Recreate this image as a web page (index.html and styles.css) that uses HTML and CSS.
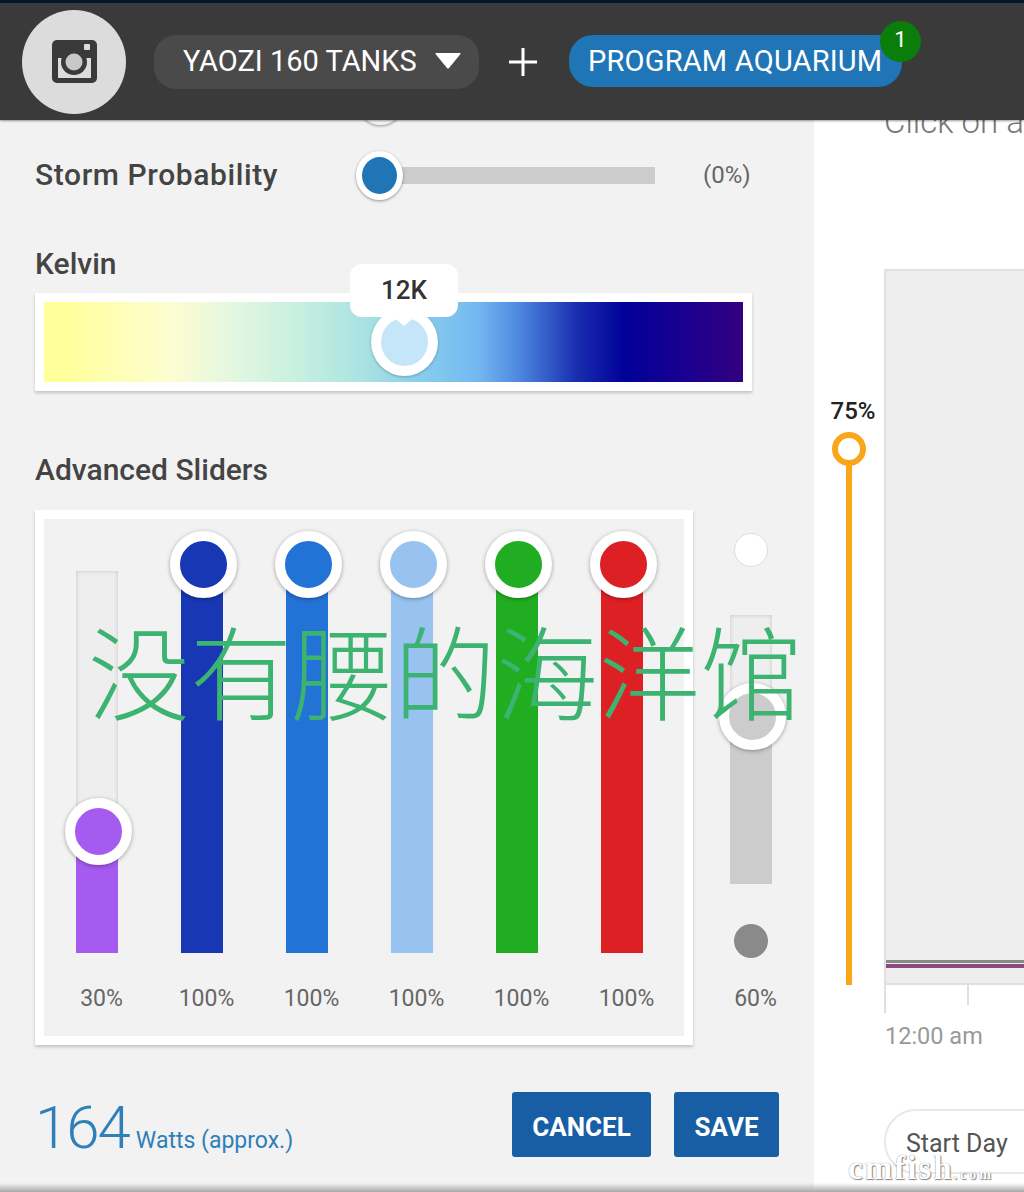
FILE: index.html
```html
<!DOCTYPE html>
<html lang="zh">
<head>
  <meta charset="UTF-8" />
  <meta name="viewport" content="width=device-width, initial-scale=1.0" />
  <title>Program Aquarium</title>
  <link rel="stylesheet" href="styles.css">
</head>
<body>
  <header class="topbar">
    <div class="logo">
      <svg width="45" height="43" viewBox="0 0 45 43">
        <rect width="45" height="43" rx="5" fill="#3a3a3a"/>
        <rect x="6" y="18" width="33" height="20" fill="#dcdcdc"/>
        <circle cx="22" cy="22" r="13" fill="#3a3a3a"/>
        <circle cx="22" cy="22" r="8.5" fill="#c8c8c8"/>
        <rect x="32" y="4" width="6" height="6" rx="1" fill="#dcdcdc"/>
      </svg>
    </div>
    <div class="tank-select">
      <span>YAOZI 160 TANKS</span>
      <svg width="26" height="16" viewBox="0 0 26 16"><path d="M1 0h24q1 0 .5 1L14 15q-1 1-2 0L.5 1Q0 0 1 0z" fill="#fff"/></svg>
    </div>
    <svg class="plus" width="28" height="28" viewBox="0 0 28 28"><path d="M14 0v28M0 14h28" stroke="#fff" stroke-width="3"/></svg>
    <div class="program-btn">
      PROGRAM AQUARIUM
      <span class="badge">1</span>
    </div>
  </header>

  <main class="page">
    <section class="panel">
      <div class="peek"></div>

      <div class="storm">
        <div class="label storm-label">Storm Probability</div>
        <div class="storm-track"><span class="storm-thumb"></span></div>
        <div class="storm-value">(0%)</div>
      </div>

      <div class="label kelvin-label">Kelvin</div>
      <div class="kelvin">
        <div class="kelvin-bar">
          <span class="kelvin-thumb"></span>
          <span class="kelvin-tip">12K</span>
        </div>
      </div>

      <div class="label advanced-label">Advanced Sliders</div>
      <div class="sliders">
        <div class="card">
          <div class="channel">
            <div class="track">
              <div class="fill purple" style="height: 30%"></div>
              <span class="thumb purple" style="bottom: 30%"></span>
            </div>
            <div class="pct">30%</div>
          </div>
          <div class="channel">
            <div class="track">
              <div class="fill navy" style="height: 100%"></div>
              <span class="thumb navy" style="bottom: 100%"></span>
            </div>
            <div class="pct">100%</div>
          </div>
          <div class="channel">
            <div class="track">
              <div class="fill blue" style="height: 100%"></div>
              <span class="thumb blue" style="bottom: 100%"></span>
            </div>
            <div class="pct">100%</div>
          </div>
          <div class="channel">
            <div class="track">
              <div class="fill sky" style="height: 100%"></div>
              <span class="thumb sky" style="bottom: 100%"></span>
            </div>
            <div class="pct">100%</div>
          </div>
          <div class="channel">
            <div class="track">
              <div class="fill green" style="height: 100%"></div>
              <span class="thumb green" style="bottom: 100%"></span>
            </div>
            <div class="pct">100%</div>
          </div>
          <div class="channel">
            <div class="track">
              <div class="fill red" style="height: 100%"></div>
              <span class="thumb red" style="bottom: 100%"></span>
            </div>
            <div class="pct">100%</div>
          </div>
        </div>

        <div class="dimmer">
          <span class="sun"></span>
          <div class="dim-track">
            <div class="fill grey" style="height: 60%"></div>
            <span class="thumb grey" style="bottom: 60%"></span>
          </div>
          <span class="moon"></span>
          <div class="pct">60%</div>
        </div>
      </div>

      <div class="footer">
        <div class="watts"><span class="watts-num">164</span> <span class="watts-unit">Watts (approx.)</span></div>
        <div class="actions">
          <button class="btn cancel">CANCEL</button>
          <button class="btn">SAVE</button>
        </div>
      </div>
    </section>

    <section class="schedule">
      <div class="hint">Click on a</div>
      <div class="chart-row">
        <div class="time-slider">
          <div class="time-pct">75%</div>
          <span class="time-knob"></span>
          <span class="time-line"></span>
        </div>
        <div class="chart">
          <div class="line line-grey"></div>
          <div class="line line-purple"></div>
        </div>
      </div>
      <div class="axis">
        <span class="tick"></span>
        <span class="tick short"></span>
      </div>
      <div class="axis-label">12:00 am</div>
      <div class="start-day">Start Day</div>
    </section>
  </main>

  <div class="bottom-shade"></div>
  <div class="stamp">没有腰的海洋馆</div>
  <div class="site-mark">cmfish<small>.com</small></div>
</body>
</html>
```

FILE: styles.css
```css
* {
  box-sizing: border-box;
}
html, body {
  margin: 0;
  height: 1192px;
  overflow: hidden;
}
body {
  position: relative;
  font-family: Roboto, "Liberation Sans", sans-serif;
  background-color: #fff;
  color: #444;
}

/* top bar */
.topbar {
  position: relative;
  z-index: 2;
  display: flex;
  align-items: center;
  height: 120px;
  padding-left: 22px;
  background-color: #3a3a3a;
  border-top: 3px solid #04162a;
  box-shadow: 0 1px 2px rgba(0,0,0,.4);
}
.logo {
  display: flex;
  justify-content: center;
  align-items: center;
  width: 104px;
  height: 104px;
  border-radius: 50%;
  background-color: #dcdcdc;
}
.tank-select {
  display: flex;
  align-items: center;
  gap: 18px;
  width: 325px;
  height: 54px;
  margin-left: 28px;
  padding: 0 0 2px 29px;
  border-radius: 22px;
  background-color: #4a4a4a;
  color: #fff;
  font-size: 29px;
}
.plus {
  margin-left: 30px;
}
.program-btn {
  position: relative;
  display: flex;
  align-items: center;
  width: 333px;
  height: 52px;
  margin: -2px 0 0 32px;
  padding-left: 19px;
  border-radius: 24px;
  background-color: #1f75b5;
  color: #fff;
  font-size: 29px;
  letter-spacing: .2px;
  white-space: nowrap;
}
.badge {
  position: absolute;
  top: -14px;
  right: -19px;
  width: 41px;
  height: 41px;
  border-radius: 50%;
  background-color: #0a7d0a;
  font-size: 22px;
  line-height: 38px;
  text-align: center;
}

.page {
  display: flex;
  height: 1072px;
}

/* left panel */
.panel {
  position: relative;
  width: 814px;
  padding: 38px 0 0 35px;
  background-color: #f2f2f2;
}
.peek {
  position: absolute;
  top: -44px;
  left: 357px;
  width: 47px;
  height: 49px;
  border-radius: 50%;
  background-color: #f4f4f4;
  box-shadow: 0 1px 3px rgba(0,0,0,.4);
}
.label {
  height: 30px;
  color: #444;
  font-size: 30px;
  font-weight: 500;
  line-height: 30px;
  white-space: nowrap;
}
.storm {
  display: flex;
  align-items: center;
  height: 34px;
}
.storm-label {
  width: 345px;
  letter-spacing: .6px;
}
.storm-track {
  position: relative;
  width: 275px;
  height: 17px;
  background-color: #ccc;
}
.storm-thumb {
  position: absolute;
  top: -16px;
  left: -24px;
  width: 47px;
  height: 49px;
  border: 6px solid #fff;
  border-radius: 50%;
  background-color: #1f75b5;
  box-shadow: 0 1px 3px rgba(0,0,0,.4);
}
.storm-value {
  margin-left: 48px;
  color: #666;
  font-size: 24px;
}
.kelvin-label {
  margin-top: 57px;
}
.kelvin {
  width: 717px;
  height: 98px;
  margin-top: 14px;
  padding: 9px;
  background-color: #fff;
  box-shadow: 0 2px 3px rgba(0,0,0,.2);
}
.kelvin-bar {
  position: relative;
  height: 80px;
  background: linear-gradient(to right, #ffff99 0%, #ffff9c 3%, #fdfdd0 18%, #e4f7e0 27%, #c8f0e0 36%, #a8e2e2 46%, #84cbee 55%, #74b8f0 62%, #4d88e0 68%, #1a30b0 76%, #000099 83%, #1c0090 92%, #33007f 100%);
}
.kelvin-thumb {
  position: absolute;
  top: 6px;
  left: 327px;
  width: 67px;
  height: 68px;
  border: 10px solid #fff;
  border-radius: 50%;
  background-color: #c5e6f8;
  box-shadow: 0 1px 3px rgba(0,0,0,.25);
}
.kelvin-tip {
  position: absolute;
  top: -38px;
  left: 306px;
  width: 108px;
  height: 53px;
  border-radius: 12px;
  background-color: #fff;
  color: #333;
  font-size: 26px;
  font-weight: 500;
  line-height: 52px;
  text-align: center;
}
.kelvin-tip::after {
  content: "";
  position: absolute;
  bottom: -9px;
  left: 42px;
  border-top: 10px solid #fff;
  border-left: 12px solid transparent;
  border-right: 12px solid transparent;
}
.advanced-label {
  margin-top: 64px;
}
.sliders {
  display: flex;
  gap: 37px;
  margin-top: 25px;
}
.card {
  display: flex;
  gap: 63px;
  width: 658px;
  height: 535px;
  padding: 52px 0 0 32px;
  border: 9px solid #fff;
  background-color: #f2f2f2;
  box-shadow: 0 2px 3px rgba(0,0,0,.2);
}
.channel {
  width: 42px;
}
.track {
  position: relative;
  height: 382px;
  background-color: #eee;
  box-shadow: inset 0 0 4px rgba(0,0,0,.18);
}
.fill {
  position: absolute;
  left: 0;
  right: 0;
  bottom: 0;
}
.thumb {
  position: absolute;
  left: -11px;
  width: 67px;
  height: 67px;
  margin-bottom: -27px;
  border: 10px solid #fff;
  border-radius: 50%;
  box-shadow: 0 1px 4px rgba(0,0,0,.35);
}
.purple { background-color: #a55bef; }
.navy { background-color: #1737b4; }
.blue { background-color: #2372d6; }
.sky { background-color: #98c3f0; }
.green { background-color: #21ad21; }
.red { background-color: #dd2024; }
.grey { background-color: #ccc; }
.pct {
  display: flex;
  justify-content: center;
  height: 30px;
  margin-top: 31px;
  padding-left: 9px;
  color: #666;
  font-size: 23px;
  line-height: 30px;
  white-space: nowrap;
}

/* dimmer next to the card */
.dimmer {
  display: flex;
  flex-direction: column;
  align-items: center;
  width: 42px;
  padding-top: 23px;
}
.sun {
  width: 34px;
  height: 34px;
  border: 1px solid #ddd;
  border-radius: 50%;
  background-color: #fff;
}
.dim-track {
  position: relative;
  width: 42px;
  height: 269px;
  margin-top: 48px;
  background-color: #eee;
  box-shadow: inset 0 0 4px rgba(0,0,0,.18);
}
.moon {
  width: 34px;
  height: 34px;
  margin-top: 40px;
  border-radius: 50%;
  background-color: #8a8a8a;
}
.dimmer .pct {
  margin-top: 26px;
}

.footer {
  display: flex;
  justify-content: space-between;
  width: 744px;
  margin-top: 47px;
}
.watts {
  display: flex;
  align-items: baseline;
  gap: 7px;
  color: #2f7fb8;
}
.watts-num {
  font-size: 60px;
  font-weight: 300;
  letter-spacing: -2px;
}
.watts-unit {
  font-size: 23px;
}
.actions {
  display: flex;
  gap: 23px;
}
.btn {
  width: 105px;
  height: 65px;
  padding-top: 6px;
  border: 0;
  border-radius: 3px;
  background-color: #175ea4;
  color: #fff;
  font-family: Roboto, "Liberation Sans", sans-serif;
  font-size: 26px;
  font-weight: 700;
}
.cancel {
  width: 139px;
}

/* right side */
.schedule {
  flex: 1;
  min-width: 0;
  padding-left: 16px;
  overflow: hidden;
}
.hint {
  height: 30px;
  margin: -13px 0 0 54px;
  color: #777;
  font-size: 33px;
  font-weight: 300;
  line-height: 30px;
  white-space: nowrap;
}
.chart-row {
  display: flex;
  height: 716px;
  margin-top: 132px;
}
.time-slider {
  display: flex;
  flex-direction: column;
  justify-content: flex-end;
  align-items: center;
  width: 38px;
  margin-right: 16px;
}
.time-pct {
  height: 36px;
  margin-left: 8px;
  color: #222;
  font-size: 24px;
  font-weight: 500;
  line-height: 30px;
}
.time-knob {
  width: 34px;
  height: 34px;
  border: 6px solid #f9a61a;
  border-radius: 50%;
  background-color: #fff;
}
.time-line {
  width: 6px;
  height: 519px;
  background-color: #f9a61a;
}
.chart {
  display: flex;
  flex-direction: column;
  justify-content: flex-end;
  flex: 1;
  padding-bottom: 15px;
  background-color: #eee;
  border-top: 2px solid #e0e0e0;
  border-left: 2px solid #e0e0e0;
  border-bottom: 2px solid #e0e0e0;
}
.line {
  height: 3px;
}
.line-grey {
  background-color: #8a8a8a;
}
.line-purple {
  height: 4px;
  margin-top: 1px;
  background-color: #8c4a80;
}
.axis {
  display: flex;
  align-items: flex-start;
  gap: 81px;
  height: 28px;
  margin-left: 54px;
}
.tick {
  width: 2px;
  height: 28px;
  background-color: #e0e0e0;
}
.tick.short {
  height: 20px;
}
.axis-label {
  height: 30px;
  margin: 8px 0 0 55px;
  color: #999;
  font-size: 23.5px;
  line-height: 30px;
  white-space: nowrap;
}
.start-day {
  display: flex;
  align-items: center;
  width: 260px;
  height: 65px;
  margin: 58px 0 0 54px;
  padding: 3px 0 0 20px;
  border: 2px solid #e8e8e8;
  border-radius: 32px;
  color: #555;
  font-size: 25px;
}

/* things lying over the page */
.bottom-shade {
  position: absolute;
  left: 0;
  right: 0;
  bottom: 0;
  height: 9px;
  background: linear-gradient(#f2f2f200, #a8a8a8);
}
.stamp {
  position: absolute;
  top: 609px;
  left: 88px;
  color: #3cb371;
  font-family: "Noto Sans CJK SC", sans-serif;
  font-size: 102px;
  font-weight: 300;
  line-height: 120px;
  white-space: nowrap;
}
.site-mark {
  position: absolute;
  top: 1152px;
  left: 848px;
  color: #fff;
  font-family: "Liberation Serif", serif;
  font-size: 33px;
  font-weight: 700;
  line-height: 32px;
  letter-spacing: 2px;
  text-shadow: 0 0 1px #777, 1px 1px 1px #888;
}
.site-mark small {
  font-size: 14px;
  letter-spacing: 3px;
}
```
